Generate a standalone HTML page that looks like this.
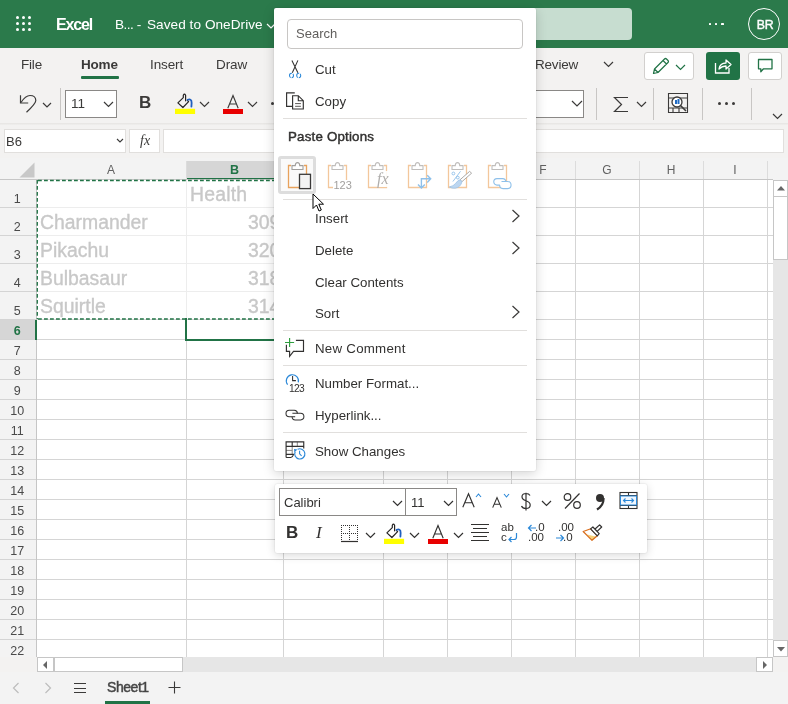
<!DOCTYPE html>
<html><head><meta charset="utf-8">
<style>
*{box-sizing:border-box;margin:0;padding:0}
html,body{width:788px;height:704px;overflow:hidden;background:#f3f2f1;font-family:"Liberation Sans",sans-serif;color:#323130;position:relative}
div,span,svg{position:absolute}
.t{white-space:nowrap;line-height:1}
svg{overflow:visible}
.t{will-change:transform}
</style></head><body>

<div style="left:0;top:0;width:788px;height:48px;background:#2b7a4b"></div>
<div style="left:15.7px;top:16.0px;width:3.4px;height:3.4px;border-radius:50%;background:#fff"></div>
<div style="left:21.8px;top:16.0px;width:3.4px;height:3.4px;border-radius:50%;background:#fff"></div>
<div style="left:27.9px;top:16.0px;width:3.4px;height:3.4px;border-radius:50%;background:#fff"></div>
<div style="left:15.7px;top:22.0px;width:3.4px;height:3.4px;border-radius:50%;background:#fff"></div>
<div style="left:21.8px;top:22.0px;width:3.4px;height:3.4px;border-radius:50%;background:#fff"></div>
<div style="left:27.9px;top:22.0px;width:3.4px;height:3.4px;border-radius:50%;background:#fff"></div>
<div style="left:15.7px;top:28.0px;width:3.4px;height:3.4px;border-radius:50%;background:#fff"></div>
<div style="left:21.8px;top:28.0px;width:3.4px;height:3.4px;border-radius:50%;background:#fff"></div>
<div style="left:27.9px;top:28.0px;width:3.4px;height:3.4px;border-radius:50%;background:#fff"></div>
<div class="t" style="left:56px;top:17.1px;font-size:16px;font-weight:bold;color:#fff;letter-spacing:-1.15px">Excel</div>
<div class="t" style="left:115px;top:17.5px;font-size:13.6px;color:#fff;letter-spacing:-0.5px">B... -</div>
<div class="t" style="left:147px;top:17.5px;font-size:13.6px;color:#fff;letter-spacing:0.05px">Saved to OneDrive</div>
<svg style="left:266px;top:23px" width="10" height="6"><path d="M1 1 L5 5 L9 1" fill="none" stroke="#fff" stroke-width="1.2"/></svg>
<div style="left:500px;top:8px;width:132px;height:32px;background:#c7ddd0;border-radius:4px"></div>
<div style="left:708.7px;top:22.6px;width:2.5px;height:2.4px;border-radius:0.6px;background:#fff"></div>
<div style="left:714.9px;top:22.6px;width:2.5px;height:2.4px;border-radius:0.6px;background:#fff"></div>
<div style="left:721.1px;top:22.6px;width:2.5px;height:2.4px;border-radius:0.6px;background:#fff"></div>
<div style="left:748px;top:8px;width:32px;height:32px;border:1.3px solid #fff;border-radius:50%"></div>
<div class="t" style="left:748.6px;top:18.6px;width:32px;text-align:center;font-size:12.3px;color:#fff;-webkit-text-stroke:0.4px #fff;letter-spacing:-0.3px">BR</div>
<div style="left:0;top:48px;width:788px;height:76px;background:#f3f2f1"></div>
<div style="left:0;top:123px;width:788px;height:2px;background:linear-gradient(#e6e4e2,#f0efee)"></div>
<div class="t" style="left:21.1px;top:58px;font-size:13.5px;color:#3b3a39;letter-spacing:-0.2px">File</div>
<div class="t" style="left:81px;top:58px;font-size:13.5px;color:#3b3a39;font-weight:bold;letter-spacing:-0.2px">Home</div>
<div style="left:81px;top:76px;width:38px;height:2.5px;background:#217346;border-radius:1px"></div>
<div class="t" style="left:150px;top:58px;font-size:13.5px;color:#3b3a39;letter-spacing:-0.1px">Insert</div>
<div class="t" style="left:215.5px;top:58px;font-size:13.5px;color:#3b3a39;letter-spacing:-0.1px">Draw</div>
<div class="t" style="left:535px;top:58px;font-size:13.5px;color:#3b3a39;letter-spacing:-0.2px">Review</div>
<svg style="left:603px;top:61px" width="11" height="7"><path d="M1 1 L5.5 5.5 L10 1" fill="none" stroke="#3b3a39" stroke-width="1.2"/></svg>
<div style="left:644px;top:52px;width:50px;height:28px;background:#fff;border:1px solid #d2d0ce;border-radius:3px"></div>
<svg style="left:651px;top:56px" width="20" height="20" viewBox="0 0 20 20"><path d="M2.5 17.5 L3.5 13 L13.5 3 Q14.5 2 15.5 3 L17 4.5 Q18 5.5 17 6.5 L7 16.5 Z M12 4.5 L15.5 8 M3.5 13 L7 16.5" fill="none" stroke="#217346" stroke-width="1.2" stroke-linejoin="round"/></svg>
<svg style="left:675px;top:63.5px" width="11" height="7"><path d="M1 1 L5.5 5.5 L10 1" fill="none" stroke="#217346" stroke-width="1.2"/></svg>
<div style="left:706px;top:52px;width:34px;height:28px;background:#217346;border-radius:3px"></div>
<svg style="left:713px;top:57px" width="20" height="18" viewBox="0 0 20 18"><path d="M2.5 6 L2.5 16 L16 16 L16 11" fill="none" stroke="#fff" stroke-width="1.3"/><path d="M6 12 Q7 6 13 6 L13 3 L18 7.5 L13 12 L13 9 Q9 9 6 12 Z" fill="none" stroke="#fff" stroke-width="1.3" stroke-linejoin="round"/></svg>
<div style="left:748px;top:52px;width:34px;height:28px;background:#fff;border:1px solid #d2d0ce;border-radius:3px"></div>
<svg style="left:757px;top:58px" width="18" height="16" viewBox="0 0 18 16"><path d="M1.5 1.5 H15 V10.8 H6.5 L3.8 13.8 V10.8 H1.5 Z" fill="none" stroke="#217346" stroke-width="1.3" stroke-linejoin="round"/></svg>
<svg style="left:18px;top:93px" width="18" height="20" viewBox="0 0 18 20"><path d="M2.5 2.2 V10 H10.2" fill="none" stroke="#3b3a39" stroke-width="1.2"/><path d="M3 9.5 Q7.5 2.5 12 2.5 Q17.8 2.5 17.8 7.5 Q17.8 10.5 8.5 19.3" fill="none" stroke="#3b3a39" stroke-width="1.2"/></svg>
<svg style="left:42px;top:102px" width="10" height="6"><path d="M1 1 L5 5 L9 1" fill="none" stroke="#3b3a39" stroke-width="1.2"/></svg>
<div style="left:59.8px;top:88px;width:1px;height:32px;background:#c8c6c4"></div>
<div style="left:65px;top:90px;width:52px;height:28px;background:#fff;border:1px solid #8a8886"></div>
<div class="t" style="left:71px;top:97px;font-size:13.5px;color:#3b3a39">11</div>
<svg style="left:103px;top:101px" width="11" height="7"><path d="M1 1 L5.5 5.5 L10 1" fill="none" stroke="#3b3a39" stroke-width="1.2"/></svg>
<div class="t" style="left:139px;top:93.7px;font-size:17px;font-weight:bold;color:#3b3a39">B</div>
<svg style="left:175px;top:93px" width="22" height="22" viewBox="0 0 22 22"><path d="M8.3 4.6 L2.9 9.9 L7.9 14.5 L13.6 8.7 L12.4 7.3 M8.3 4.6 V2.2 Q9.45 0.2 10.6 2.2 V7.8" fill="none" stroke="#252423" stroke-width="1.2" stroke-linejoin="round" stroke-linecap="round"/><path d="M12.6 6.8 Q15.2 5.6 16.3 7.6 Q16.9 9.5 16.4 13.6" fill="none" stroke="#1f5fbf" stroke-width="1.8" stroke-linecap="round"/><rect x="0" y="15.8" width="20.1" height="5.2" fill="#ffff00"/></svg>
<svg style="left:199px;top:101px" width="11" height="7"><path d="M1 1 L5.5 5.5 L10 1" fill="none" stroke="#3b3a39" stroke-width="1.2"/></svg>
<svg style="left:227px;top:94.5px" width="13" height="14" viewBox="0 0 13 14"><path d="M0.8 13.3 L6 0.6 L11.2 13.3 M2.6 9 H9.4" fill="none" stroke="#3b3a39" stroke-width="1.15"/></svg>
<div style="left:223px;top:109px;width:20px;height:5px;background:#e80000"></div>
<svg style="left:247px;top:101px" width="11" height="7"><path d="M1 1 L5.5 5.5 L10 1" fill="none" stroke="#3b3a39" stroke-width="1.2"/></svg>
<div style="left:270.5px;top:102px;width:3px;height:3px;border-radius:50%;background:#3b3a39"></div>
<div style="left:520px;top:90px;width:63.5px;height:28px;background:#fff;border:1px solid #8a8886"></div>
<svg style="left:571px;top:100px" width="12" height="7"><path d="M1 1 L6 6 L11 1" fill="none" stroke="#3b3a39" stroke-width="1.2"/></svg>
<div style="left:595.7px;top:88px;width:1px;height:32px;background:#c8c6c4"></div>
<div style="left:652.7px;top:88px;width:1px;height:32px;background:#c8c6c4"></div>
<div style="left:701.7px;top:88px;width:1px;height:32px;background:#c8c6c4"></div>
<div style="left:750.7px;top:88px;width:1px;height:32px;background:#c8c6c4"></div>
<svg style="left:613px;top:96px" width="16" height="17" viewBox="0 0 16 17"><path d="M15 1.5 H1.5 L8.5 8.5 L1.5 15.5 H15" fill="none" stroke="#3b3a39" stroke-width="1.2"/></svg>
<svg style="left:636px;top:101px" width="11" height="7"><path d="M1 1 L5.5 5.5 L10 1" fill="none" stroke="#3b3a39" stroke-width="1.2"/></svg>
<svg style="left:667px;top:92px" width="22" height="22" viewBox="0 0 22 22"><path d="M1.5 1.5 H20.5 V20.5 H1.5 Z M1.5 6 H20.5 M1.5 16 H20.5 M6 16 V20.5 M12 16 V20.5" fill="none" stroke="#3b3a39" stroke-width="1.1"/><circle cx="10" cy="10" r="5" fill="#fff" stroke="#3b3a39" stroke-width="1.3"/><path d="M13.5 13.5 L19 19" stroke="#3b3a39" stroke-width="1.6"/><rect x="8" y="8" width="2" height="4" fill="#1f6bc4"/><rect x="10.5" y="7" width="2" height="5" fill="#1f6bc4"/></svg>
<div style="left:718.0px;top:102px;width:3px;height:3px;border-radius:50%;background:#3b3a39"></div>
<div style="left:725.0px;top:102px;width:3px;height:3px;border-radius:50%;background:#3b3a39"></div>
<div style="left:732.0px;top:102px;width:3px;height:3px;border-radius:50%;background:#3b3a39"></div>
<svg style="left:772px;top:113px" width="11" height="7"><path d="M1 1 L5.5 5.5 L10 1" fill="none" stroke="#3b3a39" stroke-width="1.2"/></svg>
<div style="left:4px;top:129px;width:122px;height:24px;background:#fff;border:1px solid #e1dfdd"></div>
<div class="t" style="left:6.3px;top:134.5px;font-size:13px;color:#3b3a39">B6</div>
<svg style="left:116px;top:138px" width="8" height="5"><path d="M1 1 L4 4 L7 1" fill="none" stroke="#3b3a39" stroke-width="1.1"/></svg>
<div style="left:129px;top:129px;width:30.5px;height:24px;background:#fff;border:1px solid #e1dfdd"></div>
<div class="t" style="left:139.5px;top:134px;font-size:14px;font-style:italic;font-family:'Liberation Serif',serif;color:#3b3a39">fx</div>
<div style="left:163px;top:129px;width:621px;height:24px;background:#fff;border:1px solid #e1dfdd"></div>
<div style="left:37px;top:180px;width:736px;height:477px;background:#fff"></div>
<div style="left:0;top:158px;width:788px;height:22px;background:#f3f3f3"></div>
<div style="left:0;top:180px;width:37px;height:477px;background:#f3f3f3"></div>
<svg style="left:19px;top:162px" width="16" height="16"><path d="M15.5 0.5 V15.5 H0.5 Z" fill="#c8c8c8"/></svg>
<div style="left:186px;top:161px;width:97px;height:17px;background:#d6d6d6"></div>
<div style="left:186px;top:177.5px;width:97px;height:2px;background:#217346"></div>
<div style="left:186px;top:161px;width:1px;height:19px;background:#dcdcdc"></div>
<div class="t" style="left:35.7px;width:150px;text-align:center;top:163.7px;font-size:12px;color:#616161">A</div>
<div style="left:283px;top:161px;width:1px;height:19px;background:#dcdcdc"></div>
<div class="t" style="left:186.4px;width:97px;text-align:center;top:163.7px;font-size:12.5px;font-weight:bold;color:#217346">B</div>
<div style="left:383px;top:161px;width:1px;height:19px;background:#dcdcdc"></div>
<div class="t" style="left:282.7px;width:100px;text-align:center;top:163.7px;font-size:12px;color:#616161">C</div>
<div style="left:447px;top:161px;width:1px;height:19px;background:#dcdcdc"></div>
<div class="t" style="left:382.7px;width:64px;text-align:center;top:163.7px;font-size:12px;color:#616161">D</div>
<div style="left:511px;top:161px;width:1px;height:19px;background:#dcdcdc"></div>
<div class="t" style="left:446.7px;width:64px;text-align:center;top:163.7px;font-size:12px;color:#616161">E</div>
<div style="left:575px;top:161px;width:1px;height:19px;background:#dcdcdc"></div>
<div class="t" style="left:510.7px;width:64px;text-align:center;top:163.7px;font-size:12px;color:#616161">F</div>
<div style="left:639px;top:161px;width:1px;height:19px;background:#dcdcdc"></div>
<div class="t" style="left:574.7px;width:64px;text-align:center;top:163.7px;font-size:12px;color:#616161">G</div>
<div style="left:703px;top:161px;width:1px;height:19px;background:#dcdcdc"></div>
<div class="t" style="left:638.7px;width:64px;text-align:center;top:163.7px;font-size:12px;color:#616161">H</div>
<div style="left:767px;top:161px;width:1px;height:19px;background:#dcdcdc"></div>
<div class="t" style="left:702.7px;width:64px;text-align:center;top:163.7px;font-size:12px;color:#616161">I</div>
<div style="left:0;top:179px;width:773px;height:1px;background:#c6c6c6"></div>
<div style="left:0;top:320px;width:37px;height:20px;background:#d6d6d6"></div>
<div style="left:37px;top:207px;width:736px;height:1px;background:#d5d5d5"></div>
<div style="left:37px;top:207px;width:247px;height:1px;background:#ededed"></div>
<div style="left:0;top:207px;width:37px;height:1px;background:#d4d4d4"></div>
<div class="t" style="left:0;width:34.6px;text-align:center;top:192.5px;font-size:12.5px;color:#4a4a4a">1</div>
<div style="left:37px;top:235px;width:736px;height:1px;background:#d5d5d5"></div>
<div style="left:37px;top:235px;width:247px;height:1px;background:#ededed"></div>
<div style="left:0;top:235px;width:37px;height:1px;background:#d4d4d4"></div>
<div class="t" style="left:0;width:34.6px;text-align:center;top:220.5px;font-size:12.5px;color:#4a4a4a">2</div>
<div style="left:37px;top:263px;width:736px;height:1px;background:#d5d5d5"></div>
<div style="left:37px;top:263px;width:247px;height:1px;background:#ededed"></div>
<div style="left:0;top:263px;width:37px;height:1px;background:#d4d4d4"></div>
<div class="t" style="left:0;width:34.6px;text-align:center;top:248.5px;font-size:12.5px;color:#4a4a4a">3</div>
<div style="left:37px;top:291px;width:736px;height:1px;background:#d5d5d5"></div>
<div style="left:37px;top:291px;width:247px;height:1px;background:#ededed"></div>
<div style="left:0;top:291px;width:37px;height:1px;background:#d4d4d4"></div>
<div class="t" style="left:0;width:34.6px;text-align:center;top:276.5px;font-size:12.5px;color:#4a4a4a">4</div>
<div style="left:37px;top:319px;width:736px;height:1px;background:#d5d5d5"></div>
<div style="left:0;top:319px;width:37px;height:1px;background:#d4d4d4"></div>
<div class="t" style="left:0;width:34.6px;text-align:center;top:304.5px;font-size:12.5px;color:#4a4a4a">5</div>
<div style="left:37px;top:339px;width:736px;height:1px;background:#d5d5d5"></div>
<div style="left:0;top:339px;width:37px;height:1px;background:#d4d4d4"></div>
<div class="t" style="left:0;width:34.6px;text-align:center;top:325.0px;font-size:12.5px;font-weight:bold;color:#217346">6</div>
<div style="left:37px;top:359px;width:736px;height:1px;background:#d5d5d5"></div>
<div style="left:0;top:359px;width:37px;height:1px;background:#d4d4d4"></div>
<div class="t" style="left:0;width:34.6px;text-align:center;top:345.0px;font-size:12.5px;color:#4a4a4a">7</div>
<div style="left:37px;top:379px;width:736px;height:1px;background:#d5d5d5"></div>
<div style="left:0;top:379px;width:37px;height:1px;background:#d4d4d4"></div>
<div class="t" style="left:0;width:34.6px;text-align:center;top:365.0px;font-size:12.5px;color:#4a4a4a">8</div>
<div style="left:37px;top:399px;width:736px;height:1px;background:#d5d5d5"></div>
<div style="left:0;top:399px;width:37px;height:1px;background:#d4d4d4"></div>
<div class="t" style="left:0;width:34.6px;text-align:center;top:385.0px;font-size:12.5px;color:#4a4a4a">9</div>
<div style="left:37px;top:419px;width:736px;height:1px;background:#d5d5d5"></div>
<div style="left:0;top:419px;width:37px;height:1px;background:#d4d4d4"></div>
<div class="t" style="left:0;width:34.6px;text-align:center;top:405.0px;font-size:12.5px;color:#4a4a4a">10</div>
<div style="left:37px;top:439px;width:736px;height:1px;background:#d5d5d5"></div>
<div style="left:0;top:439px;width:37px;height:1px;background:#d4d4d4"></div>
<div class="t" style="left:0;width:34.6px;text-align:center;top:425.0px;font-size:12.5px;color:#4a4a4a">11</div>
<div style="left:37px;top:459px;width:736px;height:1px;background:#d5d5d5"></div>
<div style="left:0;top:459px;width:37px;height:1px;background:#d4d4d4"></div>
<div class="t" style="left:0;width:34.6px;text-align:center;top:445.0px;font-size:12.5px;color:#4a4a4a">12</div>
<div style="left:37px;top:479px;width:736px;height:1px;background:#d5d5d5"></div>
<div style="left:0;top:479px;width:37px;height:1px;background:#d4d4d4"></div>
<div class="t" style="left:0;width:34.6px;text-align:center;top:465.0px;font-size:12.5px;color:#4a4a4a">13</div>
<div style="left:37px;top:499px;width:736px;height:1px;background:#d5d5d5"></div>
<div style="left:0;top:499px;width:37px;height:1px;background:#d4d4d4"></div>
<div class="t" style="left:0;width:34.6px;text-align:center;top:485.0px;font-size:12.5px;color:#4a4a4a">14</div>
<div style="left:37px;top:519px;width:736px;height:1px;background:#d5d5d5"></div>
<div style="left:0;top:519px;width:37px;height:1px;background:#d4d4d4"></div>
<div class="t" style="left:0;width:34.6px;text-align:center;top:505.0px;font-size:12.5px;color:#4a4a4a">15</div>
<div style="left:37px;top:539px;width:736px;height:1px;background:#d5d5d5"></div>
<div style="left:0;top:539px;width:37px;height:1px;background:#d4d4d4"></div>
<div class="t" style="left:0;width:34.6px;text-align:center;top:525.0px;font-size:12.5px;color:#4a4a4a">16</div>
<div style="left:37px;top:559px;width:736px;height:1px;background:#d5d5d5"></div>
<div style="left:0;top:559px;width:37px;height:1px;background:#d4d4d4"></div>
<div class="t" style="left:0;width:34.6px;text-align:center;top:545.0px;font-size:12.5px;color:#4a4a4a">17</div>
<div style="left:37px;top:579px;width:736px;height:1px;background:#d5d5d5"></div>
<div style="left:0;top:579px;width:37px;height:1px;background:#d4d4d4"></div>
<div class="t" style="left:0;width:34.6px;text-align:center;top:565.0px;font-size:12.5px;color:#4a4a4a">18</div>
<div style="left:37px;top:599px;width:736px;height:1px;background:#d5d5d5"></div>
<div style="left:0;top:599px;width:37px;height:1px;background:#d4d4d4"></div>
<div class="t" style="left:0;width:34.6px;text-align:center;top:585.0px;font-size:12.5px;color:#4a4a4a">19</div>
<div style="left:37px;top:619px;width:736px;height:1px;background:#d5d5d5"></div>
<div style="left:0;top:619px;width:37px;height:1px;background:#d4d4d4"></div>
<div class="t" style="left:0;width:34.6px;text-align:center;top:605.0px;font-size:12.5px;color:#4a4a4a">20</div>
<div style="left:37px;top:639px;width:736px;height:1px;background:#d5d5d5"></div>
<div style="left:0;top:639px;width:37px;height:1px;background:#d4d4d4"></div>
<div class="t" style="left:0;width:34.6px;text-align:center;top:625.0px;font-size:12.5px;color:#4a4a4a">21</div>
<div class="t" style="left:0;width:34.6px;text-align:center;top:645.0px;font-size:12.5px;color:#4a4a4a">22</div>
<div style="left:186px;top:180px;width:1px;height:477px;background:#d5d5d5"></div>
<div style="left:283px;top:180px;width:1px;height:477px;background:#d5d5d5"></div>
<div style="left:383px;top:180px;width:1px;height:477px;background:#d5d5d5"></div>
<div style="left:447px;top:180px;width:1px;height:477px;background:#d5d5d5"></div>
<div style="left:511px;top:180px;width:1px;height:477px;background:#d5d5d5"></div>
<div style="left:575px;top:180px;width:1px;height:477px;background:#d5d5d5"></div>
<div style="left:639px;top:180px;width:1px;height:477px;background:#d5d5d5"></div>
<div style="left:703px;top:180px;width:1px;height:477px;background:#d5d5d5"></div>
<div style="left:767px;top:180px;width:1px;height:477px;background:#d5d5d5"></div>
<div style="left:36px;top:180px;width:1px;height:477px;background:#c6c6c6"></div>
<div style="left:35px;top:320px;width:2px;height:20px;background:#217346"></div>
<div style="left:186px;top:180px;width:1px;height:139px;background:#ededed"></div>
<div class="t" style="left:190px;top:184.7px;font-size:19.4px;color:#c8c8c8;letter-spacing:0.2px;-webkit-text-stroke:0.35px #c8c8c8">Health</div>
<div class="t" style="left:39.6px;top:213.2px;font-size:19.4px;color:#c8c8c8;-webkit-text-stroke:0.35px #c8c8c8">Charmander</div>
<div class="t" style="left:247.5px;top:213.2px;font-size:19.4px;color:#c8c8c8;-webkit-text-stroke:0.35px #c8c8c8">309</div>
<div class="t" style="left:39.6px;top:241.2px;font-size:19.4px;color:#c8c8c8;-webkit-text-stroke:0.35px #c8c8c8">Pikachu</div>
<div class="t" style="left:247.5px;top:241.2px;font-size:19.4px;color:#c8c8c8;-webkit-text-stroke:0.35px #c8c8c8">320</div>
<div class="t" style="left:39.6px;top:269.2px;font-size:19.4px;color:#c8c8c8;-webkit-text-stroke:0.35px #c8c8c8">Bulbasaur</div>
<div class="t" style="left:247.5px;top:269.2px;font-size:19.4px;color:#c8c8c8;-webkit-text-stroke:0.35px #c8c8c8">318</div>
<div class="t" style="left:39.6px;top:297.2px;font-size:19.4px;color:#c8c8c8;-webkit-text-stroke:0.35px #c8c8c8">Squirtle</div>
<div class="t" style="left:247.5px;top:297.2px;font-size:19.4px;color:#c8c8c8;-webkit-text-stroke:0.35px #c8c8c8">314</div>
<svg style="left:0;top:0" width="788" height="704"><path d="M38 180.5 H284 M38 319 H284 M37.3 180 V319" fill="none" stroke="#217346" stroke-width="1.3" stroke-dasharray="3.8 2.2"/></svg>
<div style="left:185px;top:318px;width:2px;height:23px;background:#217346"></div>
<div style="left:185px;top:339px;width:100px;height:2px;background:#217346"></div>
<div style="left:773px;top:180px;width:15px;height:477px;background:#e6e6e6"></div>
<div style="left:773px;top:180px;width:15px;height:16.5px;background:#fff;border:1px solid #c6c6c6"></div>
<svg style="left:776px;top:185px" width="10" height="6"><path d="M1 5.5 L5 1 L9 5.5 Z" fill="#666"/></svg>
<div style="left:773px;top:196px;width:15px;height:64px;background:#fff;border:1px solid #c6c6c6"></div>
<div style="left:773px;top:640px;width:15px;height:17px;background:#fff;border:1px solid #c6c6c6"></div>
<svg style="left:776px;top:646px" width="10" height="6"><path d="M1 1 L5 5.5 L9 1 Z" fill="#666"/></svg>
<div style="left:37px;top:657px;width:736px;height:15px;background:#e6e6e6"></div>
<div style="left:37px;top:657px;width:16.5px;height:15px;background:#fff;border:1px solid #c6c6c6"></div>
<svg style="left:42px;top:660px" width="6" height="10"><path d="M5 1 L1 5 L5 9 Z" fill="#666"/></svg>
<div style="left:53.5px;top:657px;width:129px;height:15px;background:#fff;border:1px solid #c6c6c6"></div>
<div style="left:756px;top:657px;width:16.5px;height:15px;background:#fff;border:1px solid #c6c6c6"></div>
<svg style="left:762px;top:660px" width="6" height="10"><path d="M1 1 L5 5 L1 9 Z" fill="#666"/></svg>
<div style="left:0;top:672px;width:788px;height:32px;background:#f3f3f3"></div>
<svg style="left:12px;top:682px" width="8" height="12"><path d="M6.5 1 L1.5 6 L6.5 11" fill="none" stroke="#bdbdbd" stroke-width="1.2"/></svg>
<svg style="left:44px;top:682px" width="8" height="12"><path d="M1.5 1 L6.5 6 L1.5 11" fill="none" stroke="#bdbdbd" stroke-width="1.2"/></svg>
<svg style="left:73px;top:682px" width="14" height="12"><path d="M1 1.5 H13 M1 6.5 H13 M1 10.5 H13" stroke="#3b3a39" stroke-width="1"/></svg>
<div class="t" style="left:107px;top:680.3px;font-size:14px;color:#444;-webkit-text-stroke:0.45px #444;letter-spacing:-0.45px">Sheet1</div>
<div style="left:105px;top:701px;width:45px;height:3px;background:#217346"></div>
<svg style="left:168px;top:681px" width="13" height="13"><path d="M6.5 0.5 V12.5 M0.5 6.5 H12.5" stroke="#3b3a39" stroke-width="1.1"/></svg>
<div style="left:274px;top:8px;width:262px;height:463px;background:#fff;box-shadow:0 0 2px rgba(0,0,0,.14),0 3px 12px rgba(0,0,0,.17);border-radius:2px"></div>
<div style="left:287px;top:19px;width:236px;height:30px;background:#fff;border:1px solid #c8c6c4;border-radius:4px"></div>
<div class="t" style="left:296px;top:26.8px;font-size:13px;color:#605e5c">Search</div>
<div class="t" style="left:315px;top:62.8px;font-size:13.3px;color:#323130;">Cut</div>
<div class="t" style="left:315px;top:95.0px;font-size:13.3px;color:#323130;">Copy</div>
<div style="left:283px;top:118px;width:244px;height:1px;background:#e1dfdd"></div>
<div class="t" style="left:287.5px;top:129.6px;font-size:13.3px;color:#323130;-webkit-text-stroke:0.45px #323130;letter-spacing:0.2px;">Paste Options</div>
<div style="left:283px;top:199px;width:244px;height:1px;background:#e1dfdd"></div>
<div style="left:283px;top:330px;width:244px;height:1px;background:#e1dfdd"></div>
<div style="left:283px;top:365px;width:244px;height:1px;background:#e1dfdd"></div>
<div style="left:283px;top:432px;width:244px;height:1px;background:#e1dfdd"></div>
<div class="t" style="left:315px;top:211.5px;font-size:13.3px;color:#323130;">Insert</div>
<div class="t" style="left:315px;top:243.7px;font-size:13.3px;color:#323130;">Delete</div>
<div class="t" style="left:315px;top:275.5px;font-size:13.3px;color:#323130;">Clear Contents</div>
<div class="t" style="left:315px;top:307.4px;font-size:13.3px;color:#323130;">Sort</div>
<div class="t" style="left:315px;top:341.6px;font-size:13.3px;color:#323130;letter-spacing:0.25px">New Comment</div>
<div class="t" style="left:315px;top:377.0px;font-size:13.3px;color:#323130;">Number Format...</div>
<div class="t" style="left:315px;top:408.9px;font-size:13.3px;color:#323130;">Hyperlink...</div>
<div class="t" style="left:315px;top:444.8px;font-size:13.3px;color:#323130;">Show Changes</div>
<svg style="left:511px;top:208.8px" width="10" height="14"><path d="M1.5 1 L8 7 L1.5 13" fill="none" stroke="#3b3a39" stroke-width="1.2"/></svg>
<svg style="left:511px;top:241px" width="10" height="14"><path d="M1.5 1 L8 7 L1.5 13" fill="none" stroke="#3b3a39" stroke-width="1.2"/></svg>
<svg style="left:511px;top:305px" width="10" height="14"><path d="M1.5 1 L8 7 L1.5 13" fill="none" stroke="#3b3a39" stroke-width="1.2"/></svg>
<svg style="left:282px;top:56px" width="28" height="56" viewBox="0 0 28 56">
<path d="M9.9 4.4 L15.9 16.7 M15.9 4.4 L10.3 16.7" fill="none" stroke="#323130" stroke-width="1.05"/>
<ellipse cx="9.5" cy="19.5" rx="2" ry="2.3" fill="none" stroke="#2b88d8" stroke-width="1.05" stroke-dasharray="2.95 0.9 5.85 0.9 3.5"/>
<ellipse cx="16.7" cy="19.5" rx="2" ry="2.3" fill="none" stroke="#2b88d8" stroke-width="1.05" stroke-dasharray="2.95 0.9 5.85 0.9 3.5"/>
<path d="M12.2 37.6 V36.9 H4.6 V50.3 H10.3" fill="none" stroke="#323130" stroke-width="1.15"/>
<path d="M10.6 39.7 H16.3 L21.3 44.7 V53 H10.6 Z M16.3 39.7 V44.7 H21.3" fill="#fff" stroke="#323130" stroke-width="1.15" stroke-linejoin="miter"/>
<path d="M13.1 47.6 H18.9 M13.1 50.3 H18.9" stroke="#5a5856" stroke-width="1"/>
</svg>
<div style="left:278.2px;top:156px;width:37.4px;height:37.6px;background:#fafafa;border:3.3px solid #dddddd;border-radius:3px"></div>
<svg style="left:286.5px;top:162px" width="26" height="30" viewBox="0 0 26 30"><path d="M4 3.5 H1.5 V25.5 H19.5 V3.5 H17" fill="none" stroke="#e8a25c" stroke-width="1.3"/><path d="M5 7.5 V3.6 H8.3 Q8.3 0.6 10.5 0.6 Q12.7 0.6 12.7 3.6 H16 V7.5 Z" fill="#fff" stroke="#a19f9d" stroke-width="1.1"/><rect x="12.5" y="12.3" width="11" height="14.3" fill="#f3f3f3" stroke="#3b3a39" stroke-width="1.3"/></svg>
<svg style="left:326.5px;top:162px" width="26" height="30" viewBox="0 0 26 30"><path d="M4 3.5 H1.5 V25.5 H19.5 V3.5 H17" fill="none" stroke="#f3c79c" stroke-width="1.3"/><path d="M5 7.5 V3.6 H8.3 Q8.3 0.6 10.5 0.6 Q12.7 0.6 12.7 3.6 H16 V7.5 Z" fill="#fff" stroke="#c0bebc" stroke-width="1.1"/></svg>
<div class="t" style="left:332.6px;top:179.5px;font-size:11px;color:#a19f9d;background:#fff;padding:0 0 0 0.5px">123</div>
<svg style="left:366.5px;top:162px" width="26" height="30" viewBox="0 0 26 30"><path d="M4 3.5 H1.5 V25.5 H19.5 V3.5 H17" fill="none" stroke="#f3c79c" stroke-width="1.3"/><path d="M5 7.5 V3.6 H8.3 Q8.3 0.6 10.5 0.6 Q12.7 0.6 12.7 3.6 H16 V7.5 Z" fill="#fff" stroke="#c0bebc" stroke-width="1.1"/></svg>
<div class="t" style="left:377px;top:171px;font-size:16px;font-style:italic;font-family:'Liberation Serif',serif;color:#b0aeac;background:rgba(255,255,255,0.9)">fx</div>
<svg style="left:406.5px;top:162px" width="26" height="30" viewBox="0 0 26 30"><path d="M4 3.5 H1.5 V25.5 H19.5 V3.5 H17" fill="none" stroke="#f3c79c" stroke-width="1.3"/><path d="M5 7.5 V3.6 H8.3 Q8.3 0.6 10.5 0.6 Q12.7 0.6 12.7 3.6 H16 V7.5 Z" fill="#fff" stroke="#c0bebc" stroke-width="1.1"/><path d="M14.4 26 V16.8 H23.8 M11 22.4 L14.4 25.9 L17.8 22.4 M20.2 13.2 L23.7 16.8 L20.2 20.4" fill="none" stroke="#8ec0ea" stroke-width="1.4"/></svg>
<svg style="left:446.5px;top:162px" width="26" height="30" viewBox="0 0 26 30"><path d="M4 3.5 H1.5 V25.5 H19.5 V3.5 H17" fill="none" stroke="#f3c79c" stroke-width="1.3"/><path d="M5 7.5 V3.6 H8.3 Q8.3 0.6 10.5 0.6 Q12.7 0.6 12.7 3.6 H16 V7.5 Z" fill="#fff" stroke="#c0bebc" stroke-width="1.1"/><circle cx="6.4" cy="11.5" r="1.4" fill="none" stroke="#8ec0ea" stroke-width="0.9"/><circle cx="10.8" cy="15.6" r="1.4" fill="none" stroke="#8ec0ea" stroke-width="0.9"/><path d="M13.5 9.3 L5.9 19.5" stroke="#8ec0ea" stroke-width="0.9"/><path d="M22.6 9.4 L24.6 11.2 L15 19.6 L13 17.8 Z" fill="#fff" stroke="#a19f9d" stroke-width="0.9"/><path d="M13 17.8 L15 19.6 Q13.5 25.5 8.2 26.2 Q4.5 26.5 2.4 24.9 Q6.5 24.2 8.5 21.5 Q10.5 18.5 13 17.8 Z" fill="#bcd6f0" stroke="#9cc2e6" stroke-width="0.8"/></svg>
<svg style="left:486.5px;top:162px" width="26" height="30" viewBox="0 0 26 30"><path d="M4 3.5 H1.5 V25.5 H19.5 V3.5 H17" fill="none" stroke="#f3c79c" stroke-width="1.3"/><path d="M5 7.5 V3.6 H8.3 Q8.3 0.6 10.5 0.6 Q12.7 0.6 12.7 3.6 H16 V7.5 Z" fill="#fff" stroke="#c0bebc" stroke-width="1.1"/><path d="M16 23.1 H10 A3.25 3.25 0 0 1 10 16.6 H15.6 A3.25 3.25 0 0 1 18.8 19.8" fill="none" stroke="#8ec0ea" stroke-width="1.1"/><path d="M14.5 19.5 H20.5 A3.55 3.55 0 0 1 20.5 26.6 H16 A3.55 3.55 0 0 1 12.6 23" fill="#fff" stroke="#8ec0ea" stroke-width="1.1"/></svg>
<svg style="left:311.5px;top:193px" width="14" height="20" viewBox="0 0 14 20"><path d="M1 1 V15.5 L4.5 12 L7 18 L9.3 17 L6.8 11.2 H11.5 Z" fill="#fff" stroke="#000" stroke-width="1" stroke-linejoin="round"/></svg>
<svg style="left:280px;top:334px" width="30" height="28" viewBox="0 0 30 28">
<path d="M15.9 6.4 H23.5 V17.4 H13.5 L9.6 22.3 V17.4 H6.4 V10.8" fill="none" stroke="#323130" stroke-width="1.15" stroke-linejoin="miter"/>
<path d="M9.6 4 V13.1 M5 8.5 H14.1" stroke="#2e9e3e" stroke-width="1.15"/>
</svg>
<svg style="left:280px;top:366px" width="30" height="60" viewBox="0 0 30 60">
<path d="M7.6 18.6 A6.1 6.1 0 1 1 18.3 16.4" fill="none" stroke="#2b88d8" stroke-width="1.15"/>
<path d="M12.6 10 V14.6 H15.9" fill="none" stroke="#323130" stroke-width="1.05"/>
<path d="M15.2 50.7 H9.2 A3.2 3.2 0 0 1 9.2 44.3 H14.3 A3.2 3.2 0 0 1 17.4 47.4" fill="none" stroke="#323130" stroke-width="1.05"/>
<path d="M12.4 47.3 H20.6 A3.3 3.3 0 0 1 20.6 53.9 H15.3 A3.3 3.3 0 0 1 12.1 50.7" fill="none" stroke="#323130" stroke-width="1.05"/>
</svg>
<div class="t" style="left:288.8px;top:384px;font-size:10.2px;color:#323130;letter-spacing:-0.7px">123</div>
<svg style="left:280px;top:428px" width="30" height="35" viewBox="0 0 30 35">
<path d="M12.2 18.3 V26.4 M17.3 13.9 V18.3 M6.1 22.4 H12.2" fill="none" stroke="#8a8886" stroke-width="1"/>
<path d="M6.1 29.5 V13.9 H23.75 V20.4 M6.1 18.3 H23.75 M6.1 29.5 H10.8 Q12.6 29.2 13.6 26.4 H6.1 M12.2 13.9 V18.3" fill="none" stroke="#323130" stroke-width="1.15"/>
<path d="M15.2 23.7 A5.1 5.1 0 1 0 17.6 21.3" fill="none" stroke="#2b88d8" stroke-width="1.15"/>
<path d="M14 21 L17.4 21.6 L14.4 24.6 Z" fill="#2b88d8"/>
<path d="M19.6 22.8 V25.8 L21.6 27.8" fill="none" stroke="#2b88d8" stroke-width="1.1"/>
</svg>
<div style="left:275px;top:483.5px;width:371.5px;height:69.5px;background:#fff;box-shadow:0 0 2px rgba(0,0,0,.14),0 2px 10px rgba(0,0,0,.16);border-radius:2px"></div>
<div style="left:278.5px;top:488px;width:127.5px;height:28px;border:1px solid #8a8886"></div>
<div style="left:405px;top:488px;width:51.5px;height:28px;border:1px solid #8a8886"></div>
<div class="t" style="left:283.5px;top:495.5px;font-size:13px;color:#323130">Calibri</div>
<div class="t" style="left:411px;top:495.5px;font-size:13px;color:#323130">11</div>
<svg style="left:392px;top:499.5px" width="11" height="7"><path d="M1 1 L5.5 5.5 L10 1" fill="none" stroke="#323130" stroke-width="1.2"/></svg>
<svg style="left:443px;top:499.5px" width="11" height="7"><path d="M1 1 L5.5 5.5 L10 1" fill="none" stroke="#323130" stroke-width="1.2"/></svg>
<svg style="left:462px;top:493px" width="14" height="15" viewBox="0 0 14 15"><path d="M0.8 14.2 L6.5 0.7 L12.2 14.2 M2.7 9.7 H10.3" fill="none" stroke="#323130" stroke-width="1.15"/></svg>
<svg style="left:475px;top:493px" width="7" height="5"><path d="M1 4 L3.5 1 L6 4" fill="none" stroke="#2b88d8" stroke-width="1.1"/></svg>
<svg style="left:492px;top:496.5px" width="11" height="11" viewBox="0 0 11 11"><path d="M0.7 10.6 L5 0.6 L9.3 10.6 M2.1 7.3 H7.9" fill="none" stroke="#323130" stroke-width="1.1"/></svg>
<svg style="left:502.5px;top:493px" width="7" height="5"><path d="M1 1 L3.5 4 L6 1" fill="none" stroke="#2b88d8" stroke-width="1.1"/></svg>
<svg style="left:520px;top:490px" width="12" height="22" viewBox="0 0 12 22"><path d="M10 5.5 Q9 3.5 6 3.5 Q2 3.5 2 6.8 Q2 9.5 6 10.8 Q10.2 12.2 10.2 15 Q10.2 18.5 6 18.5 Q2.5 18.5 1.5 16 M6 2.8 V20.5" fill="none" stroke="#323130" stroke-width="1.2"/></svg>
<svg style="left:541px;top:500px" width="11" height="7"><path d="M1 1 L5.5 5.5 L10 1" fill="none" stroke="#323130" stroke-width="1.2"/></svg>
<svg style="left:562px;top:492px" width="21" height="18" viewBox="0 0 21 18"><circle cx="5.5" cy="5" r="3.3" fill="none" stroke="#323130" stroke-width="1.2"/><circle cx="15" cy="13" r="3.3" fill="none" stroke="#323130" stroke-width="1.2"/><path d="M17.5 1.5 L3 16.5" stroke="#323130" stroke-width="1.2"/></svg>
<svg style="left:595px;top:493px" width="11" height="18" viewBox="0 0 11 18"><circle cx="5" cy="5" r="4" fill="#323130"/><path d="M8.5 5 Q9 12 2 16.5" fill="none" stroke="#323130" stroke-width="2.2"/></svg>
<svg style="left:619px;top:491px" width="20" height="20" viewBox="0 0 20 20">
<rect x="1" y="1.5" width="17" height="16" fill="none" stroke="#323130" stroke-width="1.1"/>
<path d="M1 4.5 H18 M1 14.5 H18 M9.5 1.5 V4.5 M9.5 14.5 V17.5" stroke="#323130" stroke-width="1.1"/>
<rect x="1.5" y="5" width="16" height="9" fill="#f0f6fd" stroke="#2b88d8" stroke-width="1"/>
<path d="M4.5 9.5 H14.5 M6.5 7.5 L4.5 9.5 L6.5 11.5 M12.5 7.5 L14.5 9.5 L12.5 11.5" fill="none" stroke="#2b88d8" stroke-width="1.1"/>
</svg>
<div class="t" style="left:286px;top:524px;font-size:17px;font-weight:bold;color:#323130">B</div>
<div class="t" style="left:316px;top:523.5px;font-size:17px;font-style:italic;font-family:'Liberation Serif',serif;color:#323130">I</div>
<svg style="left:340px;top:524px" width="20" height="20" viewBox="0 0 20 20">
<path d="M1.5 1 V17 M9.5 1 V17 M17.5 1 V17 M1 1.5 H18 M1 9.5 H18" fill="none" stroke="#323130" stroke-width="1" stroke-dasharray="1 1"/>
<path d="M1 17.5 H18" stroke="#323130" stroke-width="1.2"/>
</svg>
<svg style="left:364.5px;top:532px" width="11" height="7"><path d="M1 1 L5.5 5.5 L10 1" fill="none" stroke="#323130" stroke-width="1.2"/></svg>
<svg style="left:383.6px;top:523.2px" width="22" height="22" viewBox="0 0 22 22"><path d="M8.3 4.6 L2.9 9.9 L7.9 14.5 L13.6 8.7 L12.4 7.3 M8.3 4.6 V2.2 Q9.45 0.2 10.6 2.2 V7.8" fill="none" stroke="#252423" stroke-width="1.2" stroke-linejoin="round" stroke-linecap="round"/><path d="M12.6 6.8 Q15.2 5.6 16.3 7.6 Q16.9 9.5 16.4 13.6" fill="none" stroke="#1f5fbf" stroke-width="1.8" stroke-linecap="round"/><rect x="0" y="15.8" width="20.1" height="5.2" fill="#ffff00"/></svg>
<svg style="left:409px;top:532px" width="11" height="7"><path d="M1 1 L5.5 5.5 L10 1" fill="none" stroke="#323130" stroke-width="1.2"/></svg>
<svg style="left:432px;top:525px" width="13" height="14" viewBox="0 0 13 14"><path d="M0.8 13.3 L6 0.6 L11.2 13.3 M2.6 9 H9.4" fill="none" stroke="#323130" stroke-width="1.15"/></svg>
<div style="left:428px;top:539px;width:20px;height:4.7px;background:#e80000"></div>
<svg style="left:453px;top:532px" width="11" height="7"><path d="M1 1 L5.5 5.5 L10 1" fill="none" stroke="#323130" stroke-width="1.2"/></svg>
<svg style="left:470px;top:523px" width="20" height="19" viewBox="0 0 20 19"><path d="M1 1.5 H19 M3 5.5 H17 M1 9.5 H19 M3 13.5 H17 M1 17.5 H19" stroke="#323130" stroke-width="1"/></svg>
<div class="t" style="left:500.5px;top:522px;font-size:11.5px;color:#323130">ab</div>
<div class="t" style="left:500.5px;top:531.5px;font-size:11.5px;color:#323130">c</div>
<svg style="left:507px;top:532px" width="11" height="10" viewBox="0 0 11 10"><path d="M9.5 1 V5 Q9.5 7.5 7 7.5 H2 M4.5 5 L2 7.5 L4.5 10" fill="none" stroke="#2b88d8" stroke-width="1.2"/></svg>
<svg style="left:527px;top:523px" width="10" height="10" viewBox="0 0 10 10"><path d="M9 5 H1.5 M4.5 2 L1.5 5 L4.5 8" fill="none" stroke="#2b88d8" stroke-width="1.2"/></svg>
<div class="t" style="left:535px;top:522px;font-size:11.5px;color:#323130">.0</div>
<div class="t" style="left:528px;top:532px;font-size:11.5px;color:#323130">.00</div>
<div class="t" style="left:557.5px;top:522px;font-size:11.5px;color:#323130">.00</div>
<svg style="left:555px;top:533px" width="10" height="10" viewBox="0 0 10 10"><path d="M1 5 H8.5 M5.5 2 L8.5 5 L5.5 8" fill="none" stroke="#2b88d8" stroke-width="1.2"/></svg>
<div class="t" style="left:563px;top:532px;font-size:11.5px;color:#323130">.0</div>
<svg style="left:578px;top:518px" width="30" height="28" viewBox="0 0 30 28">
<path d="M9 16.5 L18.5 18.8 L14 22 Z" fill="#f7d27a"/>
<path d="M5.2 13.5 L12.8 10.8 L19.3 17.8 L14 22.3 Z" fill="none" stroke="#d86c1a" stroke-width="1.2" stroke-linejoin="round"/>
<path d="M16.8 11.3 L21.6 6.9 L23.7 9 L18.9 13.6 Z" fill="#fff" stroke="#323130" stroke-width="1.2" stroke-linejoin="round"/>
<path d="M12.6 10.9 L14.9 9 L21.2 15.7 L19.3 17.9 Z" fill="#fff" stroke="#323130" stroke-width="1.2" stroke-linejoin="round"/>
</svg>
</body></html>
